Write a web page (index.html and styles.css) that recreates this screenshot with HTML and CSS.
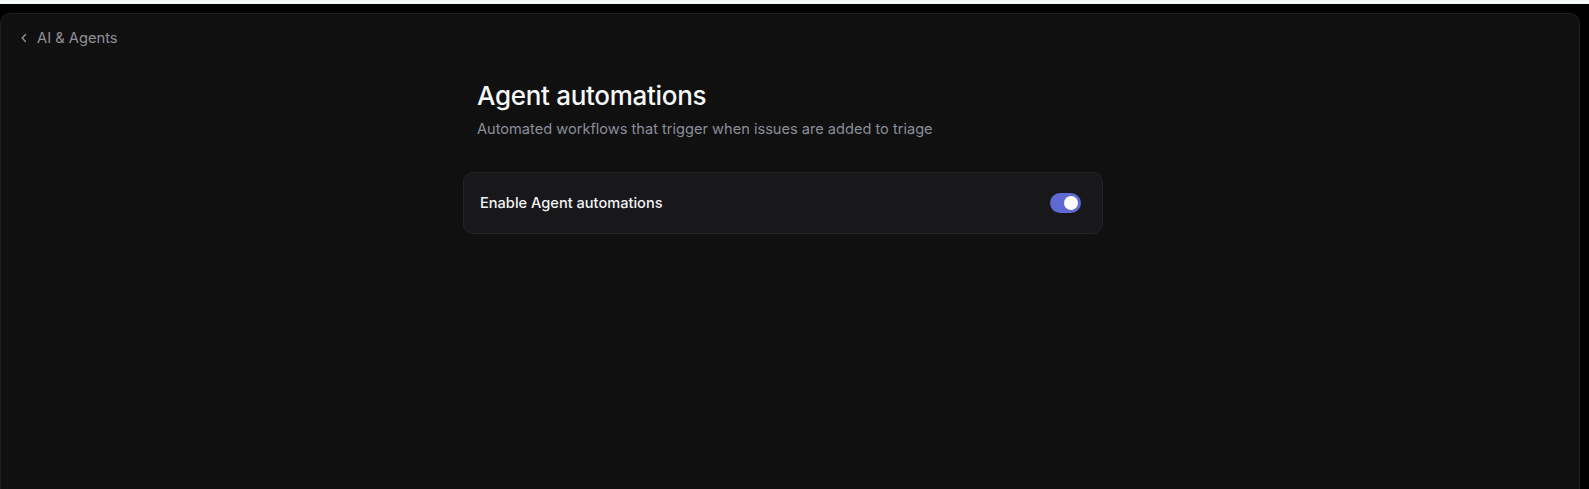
FILE: index.html
```html
<!DOCTYPE html>
<html>
<head>
<meta charset="utf-8">
<link rel="stylesheet" href="styles.css">
</head>
<body>
<div class="topstrip"></div>
<div class="frame">
  <main class="panel">
    <a class="back" href="#">
      <svg class="chev" width="8" height="10" viewBox="0 0 8 10"><path d="M5.5 1.5 L2.2 5 L5.5 8.5" fill="none" stroke="currentColor" stroke-width="1.4" stroke-linecap="round" stroke-linejoin="round"/></svg>
      <span>AI &amp; Agents</span>
    </a>
    <section class="content">
      <header class="head">
        <h1 class="title">Agent automations</h1>
        <p class="subtitle">Automated workflows that trigger when issues are added to triage</p>
      </header>
      <div class="card">
        <span class="label">Enable Agent automations</span>
        <span class="toggle"><span class="knob"></span></span>
      </div>
    </section>
  </main>
</div>
</body>
</html>
```

FILE: styles.css
```css
* { box-sizing: border-box; }
html, body { margin: 0; padding: 0; height: 100%; }
body {
  background: #000;
  font-family: Inter, "Noto Sans", sans-serif;
  overflow: hidden;
}
.topstrip { height: 4px; background: #f4faf8; }
.frame {
  padding: 9px 9px 0 0;
  height: calc(100% - 4px);
}
.panel {
  height: 100%;
  background: #101011;
  border: 1px solid #1e1e20;
  border-bottom: none;
  border-radius: 10px 10px 0 0;
  padding: 13px 0 0 19px;
}
.back {
  display: inline-flex;
  align-items: center;
  gap: 9px;
  color: #8f9196;
  text-decoration: none;
  font-size: 14.7px;
  line-height: 18px;
}
.chev { color: #8f9196; }
.content {
  margin-left: 443px;
  width: 640px;
  margin-top: 33px;
}
.head { padding-left: 14px; }
.title {
  margin: 0;
  font-size: 26px;
  font-weight: 500;
  color: #f7f8f8;
  line-height: 32px;
  letter-spacing: -0.3px;
}
.subtitle {
  margin: 7px 0 0;
  font-size: 14.6px;
  color: #8a8f98;
  line-height: 20px;
}
.card {
  margin-top: 33px;
  height: 62px;
  background: #18181b;
  border: 1px solid #232326;
  border-radius: 10px;
  display: flex;
  align-items: center;
  justify-content: space-between;
  padding: 0 21px 0 16px;
}
.label {
  font-size: 14.6px;
  font-weight: 500;
  color: #f2f3f4;
}
.toggle {
  width: 31px;
  height: 20px;
  border-radius: 10px;
  background: #5e6ad2;
  display: flex;
  align-items: center;
  justify-content: flex-end;
  padding-right: 3px;
}
.knob {
  width: 14px;
  height: 14px;
  border-radius: 50%;
  background: #fff;
}
```
